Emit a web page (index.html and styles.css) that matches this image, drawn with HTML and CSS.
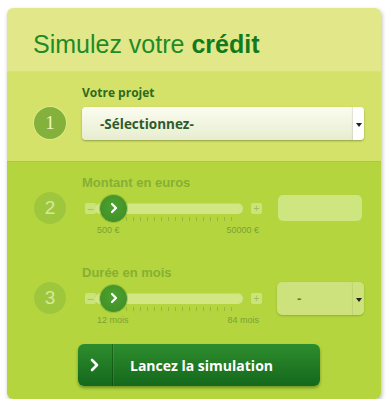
FILE: index.html
```html
<!DOCTYPE html>
<html lang="fr">
<head>
<meta charset="utf-8">
<title>Simulez votre crédit</title>
<link rel="stylesheet" href="styles.css">
</head>
<body>
<div class="card">
  <div class="head">
    <h1 class="title">Simulez votre <b>crédit</b></h1>
  </div>
  <div class="step step-1">
    <div class="step-label label-active">Votre projet</div>
    <div class="step-row">
      <div class="num num-active">1</div>
      <div class="select-main">
        <span class="select-text">-Sélectionnez-</span>
        <span class="select-arrow"></span>
      </div>
    </div>
  </div>
  <div class="lower">
    <div class="step step-2">
      <div class="step-label label-off">Montant en euros</div>
      <div class="step-row">
        <div class="num num-off">2</div>
        <div class="slider">
          <div class="slider-bar">
            <span class="pm">–</span>
            <div class="track">
              <span class="thumb"><svg width="10" height="12" viewBox="0 0 10 12"><polyline points="3,2 7,6 3,10" fill="none" stroke="#fff" stroke-width="2.2" stroke-linecap="round" stroke-linejoin="round"/></svg></span>
            </div>
            <span class="pm">+</span>
          </div>
          <div class="scale"><span>500 €</span><span>50000 €</span></div>
        </div>
        <div class="amount"></div>
      </div>
    </div>
    <div class="step step-3">
      <div class="step-label label-off">Durée en mois</div>
      <div class="step-row">
        <div class="num num-off">3</div>
        <div class="slider">
          <div class="slider-bar">
            <span class="pm">–</span>
            <div class="track">
              <span class="thumb"><svg width="10" height="12" viewBox="0 0 10 12"><polyline points="3,2 7,6 3,10" fill="none" stroke="#fff" stroke-width="2.2" stroke-linecap="round" stroke-linejoin="round"/></svg></span>
            </div>
            <span class="pm">+</span>
          </div>
          <div class="scale"><span>12 mois</span><span>84 mois</span></div>
        </div>
        <div class="select-small">
          <span class="small-text">-</span>
          <span class="select-arrow small-arrow"></span>
        </div>
      </div>
    </div>
    <div class="actions">
      <div class="btn">
        <span class="btn-icon"><svg width="10" height="14" viewBox="0 0 10 14"><polyline points="2,2 7,7 2,12" fill="none" stroke="#fff" stroke-width="2.6" stroke-linecap="round" stroke-linejoin="round"/></svg></span>
        <span class="btn-text">Lancez la simulation</span>
      </div>
    </div>
  </div>
</div>
</body>
</html>
```
FILE: styles.css
```css
* { box-sizing: border-box; }
body {
  margin: 0;
  background: #ffffff;
  font-family: "Liberation Sans", Arial, sans-serif;
}
.card {
  margin: 8px 0 0 7px;
  width: 374px;
  border-radius: 6px;
  overflow: hidden;
  box-shadow: 1px 2px 4px rgba(0, 0, 0, 0.28);
}
.head {
  height: 63px;
  padding: 21px 0 0 26px;
  background: #e2e889;
}
.title {
  margin: 0;
  font-size: 25px;
  line-height: 30px;
  font-weight: normal;
  color: #1f8a28;
}
.title b {
  font-weight: bold;
  color: #127a1d;
}
.step-1 {
  height: 90px;
  padding: 14px 0 0 27px;
  background: #d4e26a;
  border-top: 1px solid #d9e46f;
}
.step-label {
  margin-left: 48px;
  margin-bottom: 7px;
  height: 14px;
  line-height: 14px;
  font-weight: bold;
}
.label-active {
  font-family: "Open Sans", sans-serif;
  font-size: 12px;
  color: #2d6a1e;
}
.label-off {
  font-size: 13px;
  color: #86b034;
  margin-bottom: 4px;
}
.step-row {
  display: flex;
  align-items: flex-start;
}
.num {
  flex: none;
  width: 32px;
  height: 32px;
  margin-right: 16px;
  border-radius: 50%;
  text-align: center;
  line-height: 32px;
  font-size: 19px;
}
.num-active {
  background: #84b13b;
  color: #eef4c4;
  box-shadow: 0 0 0 1px rgba(240, 246, 190, 0.35);
  font-family: "Liberation Serif", serif;
}
.num-off {
  margin-top: -2px;
  background: #9fc73d;
  color: #d6e99a;
}
.select-main {
  width: 282px;
  height: 33px;
  display: flex;
  align-items: center;
  border-radius: 4px;
  background: linear-gradient(#fbfcf0, #e7edd0);
  box-shadow: 0 1px 2px rgba(60, 80, 20, 0.45);
  overflow: hidden;
}
.select-text {
  flex: 1;
  padding-left: 18px;
  font-family: "Open Sans", sans-serif;
  font-weight: bold;
  font-size: 13.5px;
  color: #2e5b2b;
}
.select-arrow {
  flex: none;
  width: 11px;
  height: 100%;
  background: #ffffff;
  position: relative;
  box-shadow: -1px 0 1px rgba(0, 0, 0, 0.08);
}
.select-arrow::after {
  content: "";
  position: absolute;
  left: 3px;
  top: 50%;
  margin-top: -1px;
  border-left: 3px solid transparent;
  border-right: 3px solid transparent;
  border-top: 4px solid #222;
}
.lower {
  background: #b4d53d;
  border-top: 1px solid #a9ca39;
}
.step-2 {
  padding: 14px 0 14px 27px;
}
.step-3 {
  padding: 16px 0 0 27px;
}
.slider {
  width: 178px;
  margin-left: 3px;
}
.slider-bar {
  height: 28px;
  display: flex;
  align-items: center;
}
.pm {
  flex: none;
  width: 11px;
  height: 11px;
  border-radius: 2px;
  background: #cce37c;
  color: #9cbf4e;
  font-size: 10px;
  line-height: 11px;
  text-align: center;
}
.track {
  flex: none;
  width: 148px;
  height: 11px;
  margin: 0 8px 0 -1px;
  border-radius: 6px;
  background: #d2e784;
  box-shadow: inset 0 1px 0 #c3dc6c;
  position: relative;
}
.track::after {
  content: "";
  position: absolute;
  left: 10px;
  right: 6px;
  top: 14px;
  height: 4px;
  background: repeating-linear-gradient(90deg, #94ba3c 0 1px, transparent 1px 7px);
}
.thumb {
  position: absolute;
  left: 5px;
  top: -8px;
  width: 27px;
  height: 27px;
  border-radius: 50%;
  background: radial-gradient(circle at 50% 40%, #4fa230, #3b8b25);
  box-shadow: 0 0 0 1px rgba(120, 170, 50, 0.5);
  display: flex;
  align-items: center;
  justify-content: center;
  z-index: 1;
}
.scale {
  display: flex;
  justify-content: space-between;
  margin-top: 3px;
  padding: 0 4px 0 12px;
  font-size: 9px;
  line-height: 11px;
  color: #7aa236;
}
.amount {
  width: 84px;
  height: 26px;
  margin: 1px 0 0 15px;
  border-radius: 5px;
  background: #cfe580;
}
.select-small {
  width: 87px;
  height: 33px;
  margin: -2px 0 0 14px;
  display: flex;
  align-items: center;
  border-radius: 5px;
  background: #cde27c;
  box-shadow: 0 1px 2px rgba(60, 90, 20, 0.3);
  overflow: hidden;
}
.small-text {
  flex: 1;
  padding-left: 20px;
  font-size: 13px;
  font-weight: bold;
  color: #5c7d2c;
}
.small-arrow {
  background: #cde27c;
  box-shadow: -1px 0 1px rgba(0, 0, 0, 0.06);
}
.actions {
  padding: 18px 0 13px 71px;
}
.btn {
  width: 242px;
  height: 42px;
  display: flex;
  align-items: center;
  border-radius: 6px;
  background: linear-gradient(#2e8d2d, #14681c);
  box-shadow: 0 2px 3px rgba(40, 70, 10, 0.45);
}
.btn-icon {
  flex: none;
  width: 35px;
  height: 100%;
  display: flex;
  align-items: center;
  justify-content: center;
  border-right: 1px solid rgba(0, 40, 0, 0.35);
  box-shadow: 1px 0 0 rgba(255, 255, 255, 0.08);
}
.btn-text {
  padding-left: 17px;
  font-family: "Open Sans", sans-serif;
  font-weight: bold;
  font-size: 14px;
  color: #ffffff;
}
```
